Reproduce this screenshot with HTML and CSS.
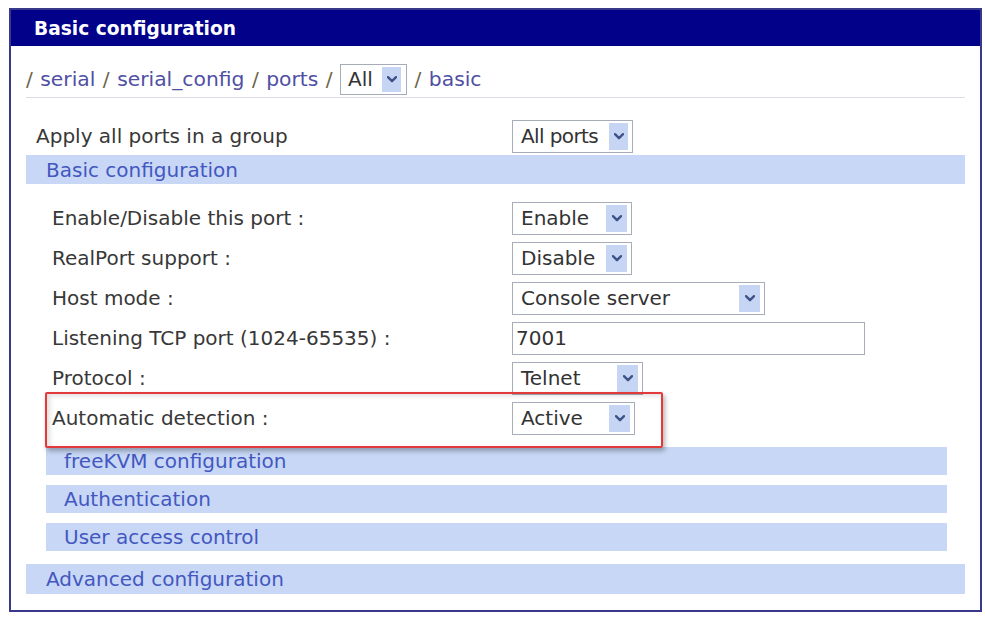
FILE: index.html
```html
<!DOCTYPE html>
<html lang="en">
<head>
<meta charset="utf-8">
<title>Basic configuration</title>
<link rel="stylesheet" href="styles.css">
</head>
<body>
<div class="panel">
  <div class="panel-head">Basic configuration</div>
  <div class="panel-body">
    <div class="crumbs">
      <span class="sep">/</span> <a class="crumb">serial</a> <span class="sep">/</span> <a class="crumb">serial_config</a> <span class="sep">/</span> <a class="crumb">ports</a> <span class="sep">/</span>
      <span class="sel sel-all"><span class="val">All</span><span class="arrow"><svg width="10" height="7" viewBox="0 0 10 7"><path d="M1 1.2 L5 5.2 L9 1.2" /></svg></span></span>
      <span class="sep">/</span> <a class="crumb">basic</a>
    </div>

    <div class="row row-top">
      <span class="label">Apply all ports in a group</span>
      <span class="sel sel-ports"><span class="val">All ports</span><span class="arrow"><svg width="10" height="7" viewBox="0 0 10 7"><path d="M1 1.2 L5 5.2 L9 1.2" /></svg></span></span>
    </div>

    <div class="bar">Basic configuration</div>

    <div class="rows">
      <div class="row">
        <span class="label">Enable/Disable this port :</span>
        <span class="sel sel-enable"><span class="val">Enable</span><span class="arrow"><svg width="10" height="7" viewBox="0 0 10 7"><path d="M1 1.2 L5 5.2 L9 1.2" /></svg></span></span>
      </div>
      <div class="row">
        <span class="label">RealPort support :</span>
        <span class="sel sel-enable"><span class="val">Disable</span><span class="arrow"><svg width="10" height="7" viewBox="0 0 10 7"><path d="M1 1.2 L5 5.2 L9 1.2" /></svg></span></span>
      </div>
      <div class="row">
        <span class="label">Host mode :</span>
        <span class="sel sel-host"><span class="val">Console server</span><span class="arrow"><svg width="10" height="7" viewBox="0 0 10 7"><path d="M1 1.2 L5 5.2 L9 1.2" /></svg></span></span>
      </div>
      <div class="row">
        <span class="label">Listening TCP port (1024-65535) :</span>
        <span class="field">7001</span>
      </div>
      <div class="row">
        <span class="label">Protocol :</span>
        <span class="sel sel-proto"><span class="val">Telnet</span><span class="arrow"><svg width="10" height="7" viewBox="0 0 10 7"><path d="M1 1.2 L5 5.2 L9 1.2" /></svg></span></span>
      </div>
      <div class="row row-marked">
        <span class="label">Automatic detection :</span>
        <span class="sel sel-active"><span class="val">Active</span><span class="arrow"><svg width="10" height="7" viewBox="0 0 10 7"><path d="M1 1.2 L5 5.2 L9 1.2" /></svg></span></span>
        <span class="mark"></span>
      </div>
    </div>

    <div class="subbars">
      <div class="bar sub">freeKVM configuration</div>
      <div class="bar sub">Authentication</div>
      <div class="bar sub">User access control</div>
    </div>

    <div class="bar bar-adv">Advanced configuration</div>
  </div>
</div>
</body>
</html>
```
FILE: styles.css
```css
* {
  box-sizing: border-box;
}

body {
  margin: 0;
  background: #ffffff;
  font-family: "DejaVu Sans", Verdana, sans-serif;
  font-size: 20px;
  color: #383838;
}

/* outer framed panel */
.panel {
  margin: 8px 0 0 9px;
  width: 973px;
  height: 604px;
  border: 2px solid #39398b;
  background: #ffffff;
}

.panel-head {
  height: 36px;
  background: #01018a;
  color: #ffffff;
  font-weight: bold;
  font-size: 18.6px;
  padding-left: 23px;
  display: flex;
  align-items: center;
}

.panel-body {
  padding: 0 15px;
}

/* breadcrumb path */
.crumbs {
  height: 52px;
  padding-top: 15px;
  line-height: 36px;
  font-size: 20.3px;
  word-spacing: 1px;
  border-bottom: 1px solid #dcdde2;
  white-space: nowrap;
}

.crumb {
  color: #4f4fa4;
  text-decoration: none;
}

.sep {
  color: #6d6549;
}

.crumbs .sel {
  vertical-align: middle;
  margin: -3px 0 0 0;
  font-size: 20px;
  word-spacing: 0;
}

/* label / control rows */
.row {
  position: relative;
  display: grid;
  grid-template-columns: 460px auto;
  align-items: center;
  height: 40px;
  padding-left: 26px;
}

.row-top {
  margin-top: 19px;
  height: 38px;
  grid-template-columns: 476px auto;
  padding-left: 10px;
}

.rows {
  margin-top: 14px;
}

.label {
  white-space: nowrap;
}

/* drop-down lists */
.sel {
  display: inline-flex;
  height: 33px;
  border: 1px solid #a6adb8;
  background: #ffffff;
  padding: 2px 4px 2px 2px;
  color: #333333;
  line-height: 1;
}

.sel .val {
  flex: 1;
  display: flex;
  align-items: center;
  padding-left: 6px;
  white-space: nowrap;
}

.sel .arrow {
  width: 21px;
  background: #c5d5f3;
  display: flex;
  align-items: center;
  justify-content: center;
}

.sel .arrow path {
  fill: none;
  stroke: #3f5389;
  stroke-width: 2.4;
  stroke-linecap: round;
  stroke-linejoin: round;
}

.sel-all {
  width: 67px;
  height: 31px;
  padding-right: 5px;
}

.sel-all .val {
  padding-left: 5px;
}

.sel-all .arrow {
  width: 19px;
}

.sel-ports { width: 121px; }
.sel-ports .val { letter-spacing: -0.6px; }
.sel-ports .arrow { width: 19px; }
.sel-enable { width: 120px; }
.sel-host { width: 253px; }
.sel-proto { width: 131px; }
.sel-active { width: 123px; }

/* text input */
.field {
  width: 353px;
  height: 33px;
  border: 1px solid #a6adb8;
  padding-left: 3px;
  display: flex;
  align-items: center;
  color: #333333;
}

/* red highlight frame over the last row */
.mark {
  position: absolute;
  left: 19px;
  top: -6px;
  width: 618px;
  height: 56px;
  border: 2px solid #e23a3a;
  border-radius: 2px;
  box-shadow: 2px 3px 5px rgba(0, 0, 0, 0.3), inset 3px 2px 5px rgba(0, 0, 0, 0.12);
  pointer-events: none;
}

/* section bars */
.bar {
  height: 29px;
  background: #c7d7f5;
  color: #4457c0;
  padding-left: 20px;
  display: flex;
  align-items: center;
  white-space: nowrap;
}

.subbars {
  margin: 9px 18px 0 20px;
  display: flex;
  flex-direction: column;
  gap: 10px;
}

.bar.sub {
  height: 28px;
  padding-left: 18px;
}

.bar-adv {
  margin-top: 13px;
  height: 30px;
}
```
